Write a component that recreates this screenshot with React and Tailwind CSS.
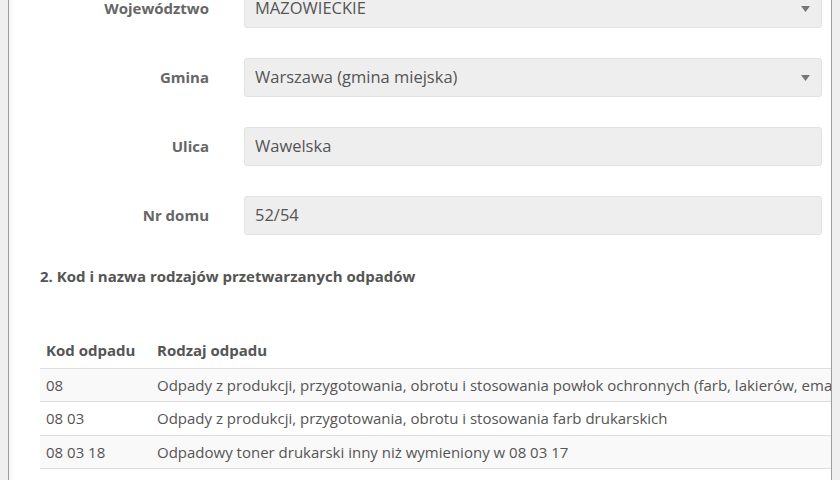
import { useState } from 'react';

const fields = [
  { label: 'Województwo', value: 'MAZOWIECKIE', select: true },
  { label: 'Gmina', value: 'Warszawa (gmina miejska)', select: true },
  { label: 'Ulica', value: 'Wawelska' },
  { label: 'Nr domu', value: '52/54' },
];

const wasteRows = [
  { code: '08', name: 'Odpady z produkcji, przygotowania, obrotu i stosowania powłok ochronnych (farb, lakierów, emalii ceramicznych), kitu, klejów, szczeliw i farb drukarskich' },
  { code: '08 03', name: 'Odpady z produkcji, przygotowania, obrotu i stosowania farb drukarskich' },
  { code: '08 03 18', name: 'Odpadowy toner drukarski inny niż wymieniony w 08 03 17' },
  { code: '16', name: 'Odpady nieujęte w innych grupach' },
];

function Caret() {
  return (
    <svg width="9" height="6" viewBox="0 0 9 6" className="shrink-0">
      <path d="M0 0h9L4.5 6z" fill="#777" />
    </svg>
  );
}

function FieldRow({ label, value, select }) {
  return (
    <div className="flex items-center">
      <label className="w-[200px] shrink-0 text-right text-[15px] font-bold text-[#666]">{label}</label>
      <div className="ml-[35px] flex h-[39px] flex-1 items-center rounded-[3px] border border-[#e2e2e2] bg-[#eeeeee] pl-[10px] pr-[11px] text-[16.5px] text-[#555]">
        <span className="flex-1 truncate">{value}</span>
        {select ? <Caret /> : null}
      </div>
    </div>
  );
}

export default function App() {
  const [rows] = useState(wasteRows);

  return (
    <div className="h-[480px] overflow-hidden bg-[#efefef] px-[8px] font-['Open_Sans',sans-serif]">
      <div className="h-full overflow-hidden border-x border-[#9c9c9c] bg-white shadow-[inset_5px_0_4px_-3px_rgba(0,0,0,0.05)]">
        <div className="mt-[-11px] flex flex-col gap-[30px] pr-[9px]">
          {fields.map((f) => (
            <FieldRow key={f.label} {...f} />
          ))}
        </div>

        <h3 className="ml-[31px] mt-[31px] text-[15px] font-bold leading-[20px] text-[#555]">
          2. Kod i nazwa rodzajów przetwarzanych odpadów
        </h3>

        <div className="ml-[31px] mt-[47px] overflow-hidden">
          <table className="w-full table-fixed border-collapse whitespace-nowrap text-left text-[15px] text-[#555]">
            <thead>
              <tr className="h-[35px]">
                <th className="w-[111px] px-[6px] align-middle font-bold">Kod odpadu</th>
                <th className="px-[6px] align-middle font-bold">Rodzaj odpadu</th>
              </tr>
            </thead>
            <tbody>
              {rows.map((row, i) => (
                <tr key={row.code} className={`h-[33.5px] border-t border-[#dedede] ${i % 2 === 0 ? 'bg-[#f9f9f9]' : 'bg-white'}`}>
                  <td className="px-[6px] align-middle">{row.code}</td>
                  <td className="px-[6px] align-middle">{row.name}</td>
                </tr>
              ))}
            </tbody>
          </table>
        </div>
      </div>
    </div>
  );
}
